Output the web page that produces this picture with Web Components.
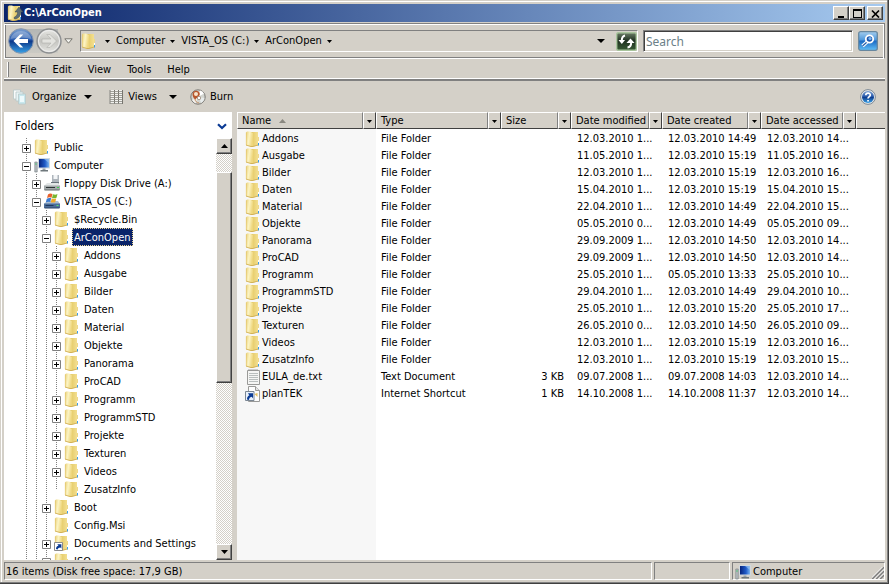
<!DOCTYPE html>
<html lang="en">
<head>
<meta charset="utf-8">
<title>C:\ArConOpen</title>
<style>
body{margin:0;background:#d4d0c8}
explorer-window{--face:#d4d0c8;--shade:#808080;--dark:#404040;--name-col:139px;
  font:11px/14px "DejaVu Sans Condensed","Noto Sans",sans-serif;color:#000}
</style>
</head>
<body>
<explorer-window></explorer-window>
<script>
const GRAD = `<defs>
<linearGradient id="fa" x2="1" y2=".3"><stop offset="0" stop-color="#e8cf78"/><stop offset=".5" stop-color="#fcf4c4"/><stop offset="1" stop-color="#eed67c"/></linearGradient>
<linearGradient id="fb"><stop offset="0" stop-color="#cfae50"/><stop offset=".4" stop-color="#e8cf70"/><stop offset="1" stop-color="#f3df90"/></linearGradient>
<linearGradient id="bl" x2="0" y2="1"><stop offset="0" stop-color="#7a9fd0"/><stop offset=".45" stop-color="#2a5cae"/><stop offset=".5" stop-color="#0b3688"/><stop offset="1" stop-color="#3aa3e8"/></linearGradient>
<linearGradient id="gr" x2="0" y2="1"><stop offset="0" stop-color="#e8e8e4"/><stop offset=".5" stop-color="#c4c4c0"/><stop offset="1" stop-color="#e6e6e2"/></linearGradient>
<linearGradient id="scr"><stop offset="0" stop-color="#06237c"/><stop offset=".6" stop-color="#1f5bc8"/><stop offset="1" stop-color="#79b4f0"/></linearGradient>
<linearGradient id="gn" x2="0" y2="1"><stop offset="0" stop-color="#6d7f68"/><stop offset=".45" stop-color="#1f3020"/><stop offset="1" stop-color="#375a34"/></linearGradient>
<linearGradient id="sb" x2="0" y2="1"><stop offset="0" stop-color="#a4cdee"/><stop offset=".45" stop-color="#4d97dc"/><stop offset=".5" stop-color="#1a69c4"/><stop offset="1" stop-color="#62c0f8"/></linearGradient>
</defs>`;
const FOLDER = `<path d="M12 6h2v8.500h-2z" fill="#edd78a"/><path d="M5 1h8v13.500L6 16z" fill="url(#fb)"/><path d="M1 1.500 2 .5h3L8 2v13.500L6 16l-5-1.500z" fill="url(#fa)"/><path d="M1 14 6 15.500h2l5-1.500" stroke="#cba84c" fill="none" stroke-width=".8"/><path d="M1.300 1.500V14" stroke="#e0c266" stroke-width=".6"/><path d="M13.500 10v2" stroke="#fff"/><path d="M13.500 12v2.500" stroke="#3a9be8"/>`;
const LINK = `<path d="M.5 7.500h8v8h-8z" fill="#fff" stroke="#8a8a8a"/><path d="M2 14c0-2 1-3 2.500-3.200L3.300 9.200H7.400v4.200l-1-1C4.800 12.600 4 13 3.600 14.500z" fill="#0a3a94"/>`;
const ICONS = {
 folder:[16,16,FOLDER],
 folderlink:[16,16,FOLDER+LINK],
 titlefolder:[16,16,FOLDER+`<path d="M7 12.500c3-1.500 3.500-3.500 3.500-5.500H8L12 2l4 5h-2.200c0 4-2 6.500-6.300 7z" fill="#5f6e72" stroke="#39474c" stroke-width=".5"/>`],
 computer:[16,16,`<path d="M.8 5h2.400v10H.8z" fill="#b9bfc2" stroke="#6f787c" stroke-width=".6"/><path d="M1.300 7h1.400" stroke="#3c6"/><path d="M4 1h12v10.500H4z" fill="#d0d8de"/><path d="M5 2h10v8.500H5z" fill="url(#scr)"/><path d="M10 2h5v4z" fill="#9cc7f2" opacity=".6"/><path d="M8.500 11.500h3V13h-3z" fill="#98a0a4"/><path d="M6.500 13h7.500v1.500H6.500z" fill="#6f787c"/>`],
 floppy:[16,16,`<path d="M8 0h7v8H8z" fill="#aeb5bc"/><path d="M9.500 0h4v4h-4z" fill="#f4f6f8"/><path d="M7 7h8v1.500H7z" fill="#68717a"/><path d="M3 8h11l2 3H0z" fill="#e2e5e6"/><path d="M0 10.500h16V15H0z" fill="#a3a9aa"/><path d="M2 12.500h9" stroke="#2c3335"/><path d="M13 12.500h2" stroke="#39d04a"/><path d="M.5 15h15" stroke="#646b6c"/>`],
 drive:[16,16,`<path d="M3 8h11l2 3H0z" fill="#a9bdd4"/><path d="M0 10.500h16V15H0z" fill="#4b6c98"/><path d="M1.500 12.500h8" stroke="#20385c"/><path d="M12.500 12.500h2" stroke="#56e06a"/><path d="M.5 15h15" stroke="#2d4468"/><path d="M4 1.500C6 0 7 .5 8.500 1l-1 3.700C6 4 5 4 3 5z" fill="#e8622c"/><path d="M9 1.200c2 .8 3 .5 4.500-.2l-1 3.800c-1.500.7-3 .7-4.500.1z" fill="#79b52f"/><path d="M2.800 5.700c1.700-1 3-.9 4.400-.4L6.200 9C4.700 8.500 3.500 8.500 1.800 9.300z" fill="#3b7bd2"/><path d="M7.700 5.500c1.500.6 3 .6 4.500 0l-1 3.700c-1.600.6-3 .5-4.500 0z" fill="#f2a92a"/>`],
 text:[16,16,`<path d="M2.500 1.500h12v14h-12z" fill="#f5f5f4" stroke="#9a9a98"/><path d="M4 0v2M6 0v2M8 0v2M10 0v2M12 0v2" stroke="#8f8f8f" stroke-width=".8"/><path d="M4 4.500h9M4 6.500h9M4 8.500h9M4 10.500h9M4 12.500h9" stroke="#b9bebe"/>`],
 url:[16,16,`<path d="M3.500.5h7l4 4v11h-11z" fill="#fdfdfd" stroke="#9a9a98"/><path d="M10.500.5v4h4" fill="#e4e4e4" stroke="#9a9a98"/><path d="M9.500 8l3-1v4z" fill="#e6c05c"/><path d="M.5 5.500H9v9H.5z" fill="#e9f1fb" stroke="#7b8794"/><path d="M2 13.500c0-2.500 1-3.800 2.400-4L3 7.200H8v5l-1.400-1.400C4.900 11.200 4.200 12 4 14z" fill="#0a3a94"/>`],
 back:[26,26,`<circle cx="13" cy="13" r="12.300" fill="url(#bl)" stroke="#8996ac"/><path d="M2.500 11a10.700 10 0 0 1 21 0Q13 8 2.500 11z" fill="#fff" opacity=".25"/><path d="M12 6.500 5.500 13 12 19.500h3.200L11 15h9v-4h-9l4.200-4.500z" fill="#fff"/>`],
 forward:[26,26,`<circle cx="13" cy="13" r="12" fill="url(#gr)" stroke="#8d8f91" stroke-width="1.400"/><circle cx="13" cy="13" r="10.500" fill="none" stroke="#eee"/><path d="M14 6.500 20.500 13 14 19.500h-3.200L15 15H6v-4h9l-4.200-4.500z" fill="#e3e3df" stroke="#b0b0ac" stroke-width=".6"/>`],
 hollow:[9,6,`<path d="M.8.8h7.400L4.500 5.200z" fill="#f4f4f0" stroke="#77756f"/>`],
 tri:[5,3,`<path d="M0 0h5L2.500 3z"/>`],
 tri7:[8,4,`<path d="M0 0h8L4 4z"/>`],
 up7:[7,4,`<path d="M0 4h7L3.500 0z"/>`],
 sort:[7,4,`<path d="M0 4h7L3.500 0z" fill="#8a8880"/>`],
 chevron:[10,7,`<path d="M1 1.200 5 5 9 1.200" fill="none" stroke="#0a3a94" stroke-width="2.200"/>`],
 refresh:[21,19,`<rect x=".7" y=".7" width="19.600" height="17.600" rx="1.500" fill="url(#gn)" stroke="#a8c49c" stroke-width="1.400"/><path d="M9 3.500C6.500 4 5.800 5.500 5.800 8.500" stroke="#fff" stroke-width="2" fill="none"/><path d="M2.500 8h6.600L5.800 12z" fill="#fff"/><path d="M11.500 15.500c3-.4 3.700-2 3.700-5" stroke="#fff" stroke-width="2" fill="none"/><path d="M10.500 11h8L14.500 6.500z" fill="#fff"/>`],
 search:[20,20,`<rect x=".7" y=".7" width="18.600" height="18.600" rx="2" fill="url(#sb)" stroke="#67879f" stroke-width="1.300"/><path d="M9 11 4.500 15" stroke="#fff" stroke-width="3.400"/><path d="M9 11 4.500 15" stroke="#205aa8" stroke-width="1.200"/><circle cx="11.500" cy="8" r="3.700" fill="#1d57ae" stroke="#fff" stroke-width="1.800"/><circle cx="12" cy="7.500" r="1.600" fill="#7fb7ef"/>`],
 help:[16,16,`<circle cx="8" cy="8" r="7.400" fill="#e4e7ea" stroke="#7d8994"/><circle cx="8" cy="8" r="6" fill="url(#bl)"/><path d="M5.800 6.300C5.800 3.400 10.300 3.500 10.300 6 10.300 7.600 8 7.600 8 9.600" fill="none" stroke="#fff" stroke-width="1.700"/><path d="M7.200 11h1.700v1.600H7.200z" fill="#fff"/>`],
 organize:[16,16,`<g stroke="#b8c8c8" stroke-width=".8"><path d="M1.500 1h7v9h-7z" fill="#f8fbfb"/><path d="M4 3h7v9H4z" fill="#e8f4f6"/><path d="M6.500 5h7v10h-7z" fill="#c8e8ee"/></g><path d="M8 7h4v6H8z" fill="#eefafc"/>`],
 views:[16,16,`<path d="M1.500 1h13v14h-13z" fill="#f2f2ef"/><path d="M2 1v14M6.500 1v14M10.500 1v14M14.500 1v14" stroke="#77756f"/><path d="M2 2.500h12M2 4.500h12M2 6.500h12M2 8.500h12M2 10.500h12M2 12.500h12M2 14.500h12" stroke="#8d8b85" stroke-width=".8"/>`],
 burn:[16,16,`<circle cx="8" cy="8" r="7.200" fill="#d3d5d0" stroke="#7a7874"/><path d="M8 8 10 1.500a7 7 0 0 1 4 3z" fill="#fff"/><path d="M8 8l6.500 1a7 7 0 0 1-3 5z" fill="#e8ecec"/><path d="M8 8 2 11a7 7 0 0 0 3.500 3.300z" fill="#f4f2ee"/><path d="M2.500 5C3 2 6 .8 8.500 2.500c2 1.500 1.800 4-.5 5.500L5 10.500C3.500 9 2.500 7 2.500 5z" fill="#b8562c"/><circle cx="6" cy="5" r="2" fill="#f8e4cc"/><path d="M5 10c0 2 2 4 4 4" stroke="#c08a60" fill="none"/><circle cx="9" cy="9" r="1.700" fill="#fff" stroke="#9a8a7a" stroke-width=".8"/>`],
 min:[9,9,`<path d="M1 7h6v2H1z"/>`],
 max:[9,9,`<path d="M0 0h9v9H0zM1 2v6h7V2z" fill-rule="evenodd"/>`],
 close:[9,9,`<path d="M1 1.500 8 8.500M8 1.500 1 8.500" stroke="#000" stroke-width="1.700"/>`],
 plus:[9,9,`<path d="M.5.5h8v8h-8z" fill="#fff" stroke="#808080"/><path d="M2 4.500h5M4.500 2v5" stroke="#000"/>`],
 minus:[9,9,`<path d="M.5.5h8v8h-8z" fill="#fff" stroke="#808080"/><path d="M2 4.500h5" stroke="#000"/>`],
 grip:[12,12,`<path d="M0 12 12 0M4 12l8-8M8 12l4-4" stroke="#808080" stroke-width="1.800"/><path d="M-1.500 12 12-1.500M2.500 12 12 2.500M6.500 12 12 6.500" stroke="#fff"/>`]
};
const BASE = `*,:host{box-sizing:border-box}:host{display:block}button{font:inherit;color:inherit;margin:0;padding:0;border:0;background:none;display:flex;align-items:center}
.raised{background:var(--face);border:1px solid;border-color:#fff var(--dark) var(--dark) #fff;box-shadow:inset -1px -1px var(--shade);justify-content:center}`;
function define(name, css, html){
  customElements.define(name, class extends HTMLElement{
    constructor(){
      super();
      const t=document.createElement('template');
      t.innerHTML=`<style>${BASE}${css}</style>${html}`;
      this.attachShadow({mode:'open'}).append(t.content.cloneNode(true));
    }
  });
}
const icon = n => `<ui-icon name="${n}"></ui-icon>`;
customElements.define('ui-icon', class extends HTMLElement{
  connectedCallback(){
    if(this.shadowRoot) return;
    const [w,h,s]=ICONS[this.getAttribute('name')];
    this.attachShadow({mode:'open'}).innerHTML=`<style>:host{display:block;flex:none}svg{display:block}</style><svg width="${w}" height="${h}" viewBox="0 0 ${w} ${h}" aria-hidden="true">${s.includes('url(')?GRAD:''}${s}</svg>`;
  }
});

define('title-bar',`:host{display:flex;flex:none;align-items:center;height:18px;padding:0 2px 0 3px;background:linear-gradient(90deg,#0a246a,#a6caf0);color:#fff}
h1{font:inherit;font-weight:bold;margin:0 auto 0 1px}
.raised{width:16px;height:14px;color:#000}.c{margin-left:2px}`,
`${icon('titlefolder')}<h1><slot></slot></h1><button class="raised" aria-label="Minimize">${icon('min')}</button><button class="raised" aria-label="Maximize">${icon('max')}</button><button class="raised c" aria-label="Close">${icon('close')}</button>`);

define('address-bar',`:host{display:flex;flex:none;align-items:center;height:36px;margin-top:1px;padding:0 6px 0 3px;border:1px solid;border-color:var(--shade) var(--shade) #fff #fff;box-shadow:inset 0 1px #fff,inset -1px 0 #fff,inset 0 -1px var(--shade),inset 1px 0 var(--shade)}
.nav{display:flex;align-items:center;gap:2px;width:72px;background:linear-gradient(#b4b6b4,#cbcac4) 16px 50%/34px 24px no-repeat}
.path{flex:1;display:flex;align-items:center;height:22px;margin-right:5px;border:1px solid;border-color:var(--shade) #fff #fff var(--shade)}
.path nav{display:flex;align-items:center;margin:0 auto 0 3px}nav ui-icon{margin:0 6px 0 5px}a{color:inherit;text-decoration:none}
.d{margin-right:11px}
input{width:210px;height:22px;margin:0 5px 0 0;padding:0 2px;border:1px solid;border-color:var(--shade) #fff #fff var(--shade);box-shadow:inset 1px 1px var(--dark),inset -1px -1px var(--face);font:12px "Noto Sans",sans-serif;background:#fff;border-radius:0}
input::placeholder{color:#6b7f88;opacity:1}`,
`<div class="nav"><button aria-label="Back">${icon('back')}</button><button aria-label="Forward">${icon('forward')}</button><button aria-label="Recent pages">${icon('hollow')}</button></div>
<div class="path">${icon('folder')}<nav aria-label="Path">${icon('tri')}<a href="#">Computer</a>${icon('tri')}<a href="#">VISTA_OS (C:)</a>${icon('tri')}<a href="#">ArConOpen</a>${icon('tri')}</nav><button class="d" aria-label="Previous locations">${icon('tri7')}</button><button aria-label="Refresh">${icon('refresh')}</button></div>
<input type="text" placeholder="Search" aria-label="Search"><button aria-label="Go">${icon('search')}</button>`);

define('menu-bar',`:host{display:flex;flex:none;align-items:center;height:22px;padding-left:3px;border-bottom:2px solid var(--shade);box-shadow:inset 0 -1px #fff}
i{width:2px;height:15px;margin-right:3px;border-left:1px solid #fff;border-right:1px solid var(--shade)}button{padding:1px 8px 0}`,
`<i></i>${['File','Edit','View','Tools','Help'].map(t=>`<button>${t}</button>`).join('')}`);

define('tool-bar',`:host{display:flex;flex:none;align-items:center;height:31px;padding:1px 9px 0 8px}
button{gap:4px}.o{margin-right:16px}.o ui-icon:last-child{margin-left:4px}.v{margin-right:13px}.v ui-icon:last-child{margin-left:8px}.h{margin-left:auto}`,
`<button class="o">${icon('organize')}Organize${icon('tri7')}</button><button class="v">${icon('views')}Views${icon('tri7')}</button><button>${icon('burn')}Burn</button><button class="h" aria-label="Help">${icon('help')}</button>`);

const TREE=[[0,'plus','folder','Public'],[0,'minus','computer','Computer'],[1,'plus','floppy','Floppy Disk Drive (A:)'],[1,'minus','drive','VISTA_OS (C:)'],[2,'plus','folder','$Recycle.Bin'],[2,'minus','folder','ArConOpen'],
...['Addons','Ausgabe','Bilder','Daten','Material','Objekte','Panorama','ProCAD','Programm','ProgrammSTD','Projekte','Texturen','Videos','ZusatzInfo'].map(n=>[3,n==='ProCAD'||n==='ZusatzInfo'?'':'plus','folder',n]),
[2,'plus','folder','Boot'],[2,'','folder','Config.Msi'],[2,'plus','folderlink','Documents and Settings'],[2,'plus','folder','ISO']];
const treeRow=([d,e,ic,n])=>`<li role="treeitem" aria-level="${d+1}"${n==='ArConOpen'?' aria-selected="true"':''}>${'<i></i>'.repeat(d)}<i class="${n==='ZusatzInfo'?'end':''}">${e?`<button aria-label="Toggle ${n}">${icon(e)}</button>`:''}</i>${icon(ic)}<span>${n}</span></li>`;
define('folder-tree',`:host{display:flex;flex-direction:column;width:228px;flex:none;background:#fff;min-height:0}
header{display:flex;align-items:center;justify-content:space-between;height:24px;flex:none;padding:0 5px 0 11px;font-size:12px}h2{font:inherit;margin:0}
.body{flex:1;display:flex;min-height:0}ul{list-style:none;margin:0;padding:0 0 0 17px;flex:1;overflow:hidden}
li{display:flex;align-items:center;height:18px;white-space:nowrap}
i{display:flex;align-items:center;flex:none;width:10px;height:18px;background:repeating-linear-gradient(var(--shade) 0 1px,transparent 1px 2px) 5px 0/1px 100% no-repeat}
i.end{background-size:1px 10px}i button{margin:2px 0 0 1px}
li>ui-icon{margin:0 2px 0 3px}span{padding:1px 2px 0;line-height:17px}
li[aria-selected] span{background:#0a246a;color:#fff;outline:1px dotted #f0d890;outline-offset:-1px}
.bar{width:16px;display:flex;flex-direction:column;background:repeating-conic-gradient(#fff 0 25%,var(--face) 0 50%) 0 0/2px 2px}
.bar button{height:16px;flex:none}.gap{flex:18}.thumb{flex:210}.rest{flex:162}.dn ui-icon{transform:rotate(180deg)}`,
`<header><h2>Folders</h2><button aria-label="Collapse folders">${icon('chevron')}</button></header><div class="body"><ul role="tree">${TREE.map(treeRow).join('')}</ul><div class="bar"><button class="raised" aria-label="Scroll up">${icon('up7')}</button><div class="gap"></div><div class="raised thumb"></div><div class="rest"></div><button class="raised dn" aria-label="Scroll down">${icon('up7')}</button></div></div>`);

const FF='File Folder',A='12.03.2010 ';
const FILES=[['Addons',A+'1...',A+'14:49',A+'14...'],['Ausgabe','11.05.2010 1...',A+'15:19','11.05.2010 16...'],['Bilder',A+'1...',A+'15:19',A+'16...'],['Daten','15.04.2010 1...',A+'15:19','15.04.2010 15...'],['Material','22.04.2010 1...',A+'14:49','22.04.2010 15...'],['Objekte','05.05.2010 0...',A+'14:49','05.05.2010 09...'],['Panorama','29.09.2009 1...',A+'14:50',A+'14...'],['ProCAD','29.09.2009 1...',A+'14:50',A+'14...'],['Programm','25.05.2010 1...','05.05.2010 13:33','25.05.2010 10...'],['ProgrammSTD','29.04.2010 1...',A+'14:49','29.04.2010 10...'],['Projekte','25.05.2010 1...',A+'15:20','25.05.2010 17...'],['Texturen','26.05.2010 0...',A+'14:50','26.05.2010 09...'],['Videos',A+'1...',A+'15:19',A+'16...'],['ZusatzInfo',A+'1...',A+'15:19',A+'15...'],['EULA_de.txt','09.07.2008 1...','09.07.2008 14:03',A+'14...','Text Document','3 KB','text'],['planTEK','14.10.2008 1...','14.10.2008 11:37',A+'14...','Internet Shortcut','1 KB','url']];
define('file-list',`:host{flex:1;min-width:0;overflow:hidden;background:linear-gradient(90deg,#f7f7f7 var(--name-col),#fff 0)}
table{width:100%;table-layout:fixed;border-collapse:collapse}th{padding:0;height:17px;font-weight:normal}
th>div{display:flex;height:17px}th button,.fill{height:17px;border:1px solid;border-color:#fff var(--shade) var(--dark) #fff;background:var(--face)}
th button{padding-top:1px}.l{flex:1;padding-left:4px;white-space:nowrap}.l ui-icon{margin-left:8px}.d{width:13px;justify-content:center;border-right-color:var(--dark)}.fill{width:100%;border-right:0}
tbody:before{content:"";display:block;height:1px}td{padding:0 0 0 6px;height:17px;white-space:nowrap;overflow:hidden}
td:first-child>div{display:flex;align-items:center;gap:1px;height:17px;padding-left:2px}td:nth-child(2){padding-left:5px}td:nth-child(3){text-align:right;padding-right:7px}`,
`<table><colgroup><col style="width:var(--name-col)"><col style="width:125px"><col style="width:70px"><col style="width:91px"><col style="width:99px"><col style="width:95px"><col></colgroup>
<thead><tr>${['Name','Type','Size','Date modified','Date created','Date accessed'].map((t,k)=>`<th scope="col"${k?'':' aria-sort="ascending"'}><div><button class="l">${t}${k?'':icon('sort')}</button><button class="d" aria-label="Filter by ${t}">${icon('tri')}</button></div></th>`).join('')}<td style="padding:0"><div class="fill"></div></td></tr></thead>
<tbody>${FILES.map(([n,m,c,a,t=FF,s='',i='folder'])=>`<tr><td><div>${icon(i)}<span>${n}</span></div></td><td>${t}</td><td>${s}</td><td>${m}</td><td>${c}</td><td>${a}</td><td></td></tr>`).join('')}</tbody></table>`);

define('status-bar',`:host{display:flex;flex:none;gap:2px;height:20px;padding-top:2px}
div{display:flex;align-items:center;border:1px solid;border-color:var(--shade) #fff #fff var(--shade);height:18px;padding-top:1px;white-space:nowrap}
.a{flex:1;padding-left:1px}.b{width:76px}.c{width:153px;gap:2px;padding-left:2px}.c .g{margin:3px 0 0 auto}`,
`<div class="a"><slot></slot></div><div class="b"></div><div class="c">${icon('computer')}<slot name="zone"></slot><ui-icon name="grip" class="g"></ui-icon></div>`);

define('explorer-window',`:host{display:flex;flex-direction:column;height:100vh;padding:4px 3px 3px 4px;border-right:1px solid var(--dark);border-bottom:1px solid var(--dark);background:var(--face);box-shadow:inset -1px -1px var(--shade),inset 1px 1px var(--face),inset 2px 2px #fff;cursor:default}
main{flex:1;display:flex;gap:5px;min-height:0}folder-tree{border-top:2px solid #fff}`,
`<title-bar>C:\\ArConOpen</title-bar><address-bar></address-bar><menu-bar></menu-bar><tool-bar></tool-bar><main><folder-tree></folder-tree><file-list></file-list></main><status-bar>16 items (Disk free space: 17,9 GB)<span slot="zone">Computer</span></status-bar>`);
</script>
</body>
</html>
